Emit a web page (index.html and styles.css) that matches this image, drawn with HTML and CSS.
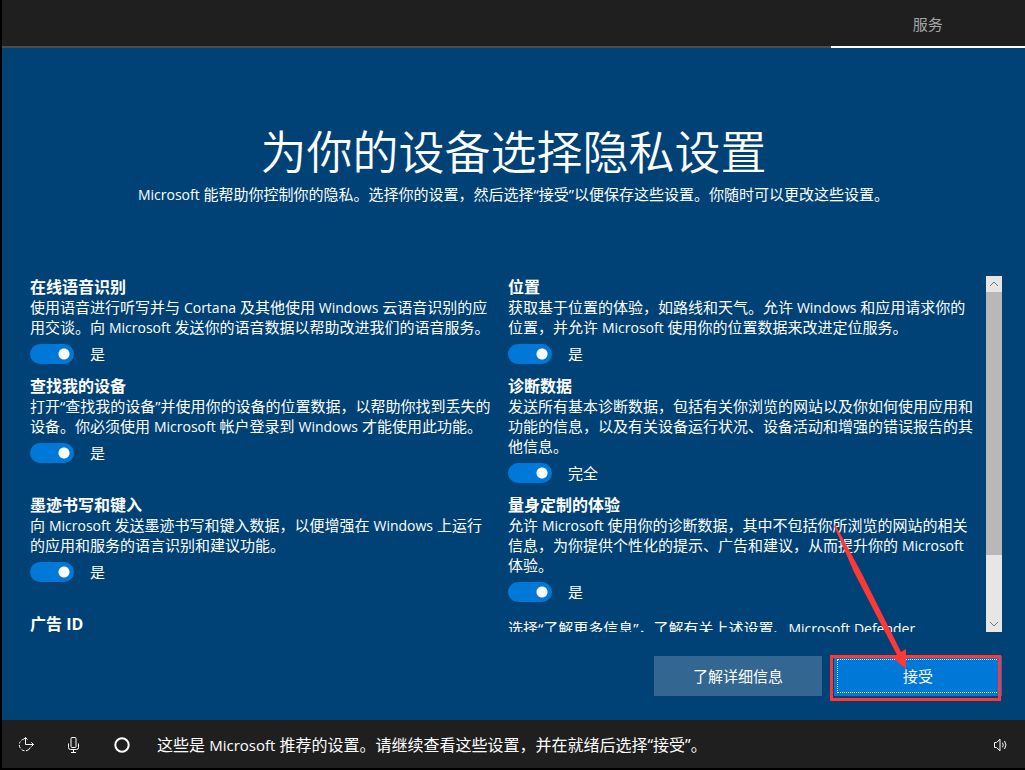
FILE: index.html
```html
<!DOCTYPE html>
<html lang="zh-CN">
<head>
<meta charset="utf-8">
<title>为你的设备选择隐私设置</title>
<link rel="stylesheet" href="styles.css">
</head>
<body>
<header class="topbar">
  <div class="tab tab-rest"></div>
  <div class="tab tab-current">服务</div>
</header>

<main class="page">
  <h1 class="title">为你的设备选择隐私设置</h1>
  <p class="subtitle"><span class="latin">Microsoft</span> 能帮助你控制你的隐私。选择你的设置，然后选择“接受”以便保存这些设置。你随时可以更改这些设置。</p>

  <div class="viewport">
    <div class="settings">
      <section class="setting">
        <h2>在线语音识别</h2>
        <p>使用语音进行听写并与 <span class="latin">Cortana</span> 及其他使用 <span class="latin">Windows</span> 云语音识别的应<br>用交谈。向 <span class="latin">Microsoft</span> 发送你的语音数据以帮助改进我们的语音服务。</p>
        <label class="switch"><input type="checkbox" checked>是</label>
      </section>
      <section class="setting">
        <h2>位置</h2>
        <p>获取基于位置的体验，如路线和天气。允许 <span class="latin">Windows</span> 和应用请求你的<br>位置，并允许 <span class="latin">Microsoft</span> 使用你的位置数据来改进定位服务。</p>
        <label class="switch"><input type="checkbox" checked>是</label>
      </section>
      <section class="setting">
        <h2>查找我的设备</h2>
        <p>打开“查找我的设备”并使用你的设备的位置数据，以帮助你找到丢失的<br>设备。你必须使用 <span class="latin">Microsoft</span> 帐户登录到 <span class="latin">Windows</span> 才能使用此功能。</p>
        <label class="switch"><input type="checkbox" checked>是</label>
      </section>
      <section class="setting">
        <h2>诊断数据</h2>
        <p>发送所有基本诊断数据，包括有关你浏览的网站以及你如何使用应用和<br>功能的信息，以及有关设备运行状况、设备活动和增强的错误报告的其<br>他信息。</p>
        <label class="switch"><input type="checkbox" checked>完全</label>
      </section>
      <section class="setting">
        <h2>墨迹书写和键入</h2>
        <p>向 <span class="latin">Microsoft</span> 发送墨迹书写和键入数据，以便增强在 <span class="latin">Windows</span> 上运行<br>的应用和服务的语言识别和建议功能。</p>
        <label class="switch"><input type="checkbox" checked>是</label>
      </section>
      <section class="setting">
        <h2>量身定制的体验</h2>
        <p>允许 <span class="latin">Microsoft</span> 使用你的诊断数据，其中不包括你所浏览的网站的相关<br>信息，为你提供个性化的提示、广告和建议，从而提升你的 <span class="latin">Microsoft</span><br>体验。</p>
        <label class="switch"><input type="checkbox" checked>是</label>
      </section>
      <section class="setting">
        <h2>广告 ID</h2>
      </section>
      <section class="setting setting-note">
        <p>选择“了解更多信息”，了解有关上述设置、<span class="latin">Microsoft Defender</span></p>
      </section>
    </div>
    <div class="scrollbar" aria-hidden="true">
      <svg class="scroll-arrow" viewBox="0 0 16 16"><path d="M4 10l4-4 4 4"/></svg>
      <div class="thumb"></div>
      <div class="track"></div>
      <svg class="scroll-arrow" viewBox="0 0 16 16"><path d="M4 6l4 4 4-4"/></svg>
    </div>
  </div>

  <div class="actions">
    <button class="btn" type="button">了解详细信息</button>
    <div class="accept">
      <button class="btn btn-primary" type="button">接受</button>
      <div class="highlight"></div>
      <svg class="pointer" viewBox="0 0 74 144" aria-hidden="true"><path d="M0 1L1.500 0 27 47 67 127 72 124V144L59 133 63 130 20 47Z"/></svg>
    </div>
  </div>
</main>

<footer class="bottombar">
  <button class="icon-btn" type="button" aria-label="轻松使用"><svg viewBox="0 0 18 18"><path d="M6.500 3A6 6 0 0 0 4.500 4.200M3.300 5.500A6 6 0 0 0 2.500 7.500M2.300 9A6 6 0 0 0 3.400 12.200M4.600 13.600A6 6 0 0 0 7.500 14.800M9 14.800A6 6 0 0 0 13.400 11.500M8.500 1.500V8.500H16.500M14.300 6.300L16.500 8.500 14.300 10.700M6.500 3.500L8.500 1.500 10.500 3.500"/></svg></button>
  <button class="icon-btn" type="button" aria-label="麦克风"><svg viewBox="0 0 18 18"><rect x="6" y="1.500" width="5" height="10" rx="1"/><path d="M3.500 7.500V11.500Q3.500 13.500 5.500 13.500H11.500Q13.500 13.500 13.500 11.500V7.500M8.500 13.500V16.500M6 16.500H11"/></svg></button>
  <button class="icon-btn" type="button" aria-label="Cortana"><svg viewBox="0 0 18 18"><circle class="ring" cx="9" cy="9" r="6.700"/></svg></button>
  <p class="status">这些是 <span class="latin">Microsoft</span> 推荐的设置。请继续查看这些设置，并在就绪后选择“接受”。</p>
  <button class="icon-btn" type="button" aria-label="音量"><svg viewBox="0 0 18 18"><path d="M2.500 6.500H4.500L8 3.200V14.800L4.500 11.500H2.500ZM10.500 6.700Q12 9 10.500 11.300M12.500 5Q15.500 9 12.500 13"/></svg></button>
</footer>
</body>
</html>
```
FILE: styles.css
```css
* {
  box-sizing: border-box;
}

body {
  margin: 0;
  height: 100vh;
  display: flex;
  flex-direction: column;
  border-left: 2px solid #000;
  border-bottom: 2px solid #000;
  background: #004275;
  color: #fff;
  font: 15px/20px "Open Sans", "Noto Sans CJK SC", sans-serif;
}

h1,
h2,
p {
  margin: 0;
}

button {
  font: inherit;
  color: inherit;
  border: 0;
  padding: 0;
}

.latin {
  font-size: 14px;
  line-height: 1;
}

.topbar {
  display: flex;
  height: 48px;
  flex: none;
  background: #1f1f1f;
}

.tab {
  display: flex;
  align-items: center;
  justify-content: center;
  padding-top: 2px;
  border-bottom: 2px solid #4c4c4c;
  color: #a5a5a5;
}

.tab-rest {
  flex: 1;
}

.tab-current {
  width: 19%;
  border-color: #fff;
}

.page {
  flex: 1;
  min-height: 0;
  display: flex;
  flex-direction: column;
  padding: 73px 23px 24px 28px;
}

.title,
.subtitle {
  padding-right: 5px;
  text-align: center;
  white-space: nowrap;
}

.title {
  font-size: 46px;
  line-height: 60px;
  font-weight: 350;
}

.subtitle {
  margin-top: 3px;
}

.viewport {
  flex: 1;
  min-height: 0;
  display: flex;
  margin-top: 72px;
}

.settings {
  flex: 1;
  display: grid;
  grid-template-columns: 1fr 1fr;
  align-content: start;
  padding-top: 1px;
  overflow: hidden;
}

.setting {
  padding-bottom: 12px;
  white-space: nowrap;
}

.setting h2 {
  font-size: 16px;
  line-height: 20px;
  font-weight: 700;
}

.setting-note {
  padding-top: 4px;
}

.switch {
  display: flex;
  align-items: center;
  gap: 16px;
  margin-top: 7px;
}

.switch input {
  appearance: none;
  width: 44px;
  height: 20px;
  margin: 0;
  border-radius: 10px;
  background: radial-gradient(circle at 34px 10px, #fff 5px, #0078d7 6px);
}

.scrollbar {
  width: 16px;
  display: flex;
  flex-direction: column;
  background: #e6e6e6;
}

.thumb {
  flex: 263;
  background: #b8b8b8;
}

.track {
  flex: 61;
}

.scroll-arrow {
  width: 16px;
  height: 16px;
  fill: none;
  stroke: #777;
}

.actions {
  display: flex;
  justify-content: flex-end;
  gap: 12px;
  margin-top: 24px;
}

.btn {
  width: 168px;
  height: 40px;
  background: #336791;
}

.accept {
  position: relative;
}

.btn-primary {
  display: block;
  background: #0078d7;
  outline: 1px dotted #fff;
  outline-offset: -4px;
}

.highlight {
  position: absolute;
  inset: -1px 1px -5px -4px;
  border: 3px solid #fd3837;
  pointer-events: none;
}

.pointer {
  position: absolute;
  left: 0;
  bottom: 27px;
  width: 74px;
  height: 144px;
  fill: #fd3837;
  pointer-events: none;
}

.bottombar {
  display: flex;
  align-items: center;
  height: 48px;
  padding-top: 2px;
  flex: none;
  background: #1f1f1f;
}

.icon-btn {
  width: 48px;
  height: 40px;
  display: grid;
  place-items: center;
  background: none;
}

.icon-btn svg {
  width: 18px;
  height: 18px;
  fill: none;
  stroke: #fff;
}

.icon-btn .ring {
  stroke-width: 2;
}

.status {
  flex: 1;
  padding-left: 11px;
  font-size: 16px;
  white-space: nowrap;
}

.status .latin {
  font-size: 15px;
}
```
